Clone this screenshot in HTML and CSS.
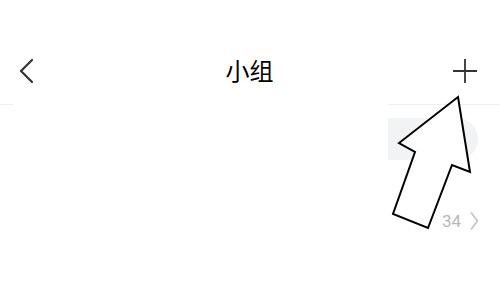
FILE: index.html
```html
<!DOCTYPE html>
<html lang="zh">
<head>
<meta charset="utf-8">
<link rel="stylesheet" href="styles.css">
</head>
<body>
<div class="page">
  <header class="nav">
    <svg class="back" width="18" height="26" viewBox="0 0 18 26"><path d="M15 2 L4 13 L15 24" fill="none" stroke="#333" stroke-width="2.2" stroke-linecap="round" stroke-linejoin="round"/></svg>
    <div class="title">小组</div>
    <svg class="plus" width="26" height="26" viewBox="0 0 26 26"><path d="M13 1 V25 M1 13 H25" fill="none" stroke="#333" stroke-width="1.8"/></svg>
  </header>
  <div class="divider"><span class="seg-left"></span><span class="seg-right"></span></div>
  <div class="pill-row"><div class="pill"></div></div>
  <div class="count-row"><span class="count">34</span><svg class="chev" width="10" height="20" viewBox="0 0 10 20"><path d="M2 1.5 L8.5 10 L2 18.5" fill="none" stroke="#c8c8c8" stroke-width="1.8"/></svg></div>
  <svg class="arrow" width="500" height="288" viewBox="0 0 500 288"><polygon points="458,97 470,172 452,165 428,228 393,214 415,152 399,143" fill="#fff" stroke="#000" stroke-width="2" stroke-linejoin="miter"/></svg>
</div>
</body>
</html>
```
FILE: styles.css
```css
html, body { margin: 0; padding: 0; background: #fff; }
.page { position: relative; width: 500px; height: 288px; overflow: hidden; font-family: "Noto Sans CJK SC", "Noto Sans", sans-serif; }
.nav { height: 66px; padding-top: 38px; display: flex; align-items: center; justify-content: space-between; padding-left: 17px; padding-right: 22px; }
.title { font-size: 24px; font-weight: 400; color: #000; line-height: 1; position: relative; left: 6px; top: -1px; }
.back { display: block; }
.plus { display: block; }
.divider { display: flex; justify-content: space-between; height: 1px; }
.seg-left { width: 13px; background: #efefef; }
.seg-right { width: 112px; background: #efefef; }
.pill-row { display: flex; justify-content: flex-end; padding-top: 13px; padding-right: 22px; }
.pill { width: 90px; height: 42px; background: #f2f3f5; border-radius: 0 21px 21px 0; }
.count-row { display: flex; justify-content: flex-end; align-items: center; gap: 8px; padding-top: 51px; padding-right: 21px; }
.count { font-family: Roboto, "Noto Sans", sans-serif; font-size: 17px; color: #b8b8b8; line-height: 20px; }
.chev { display: block; }
.arrow { position: absolute; left: 0; top: 0; }
```
